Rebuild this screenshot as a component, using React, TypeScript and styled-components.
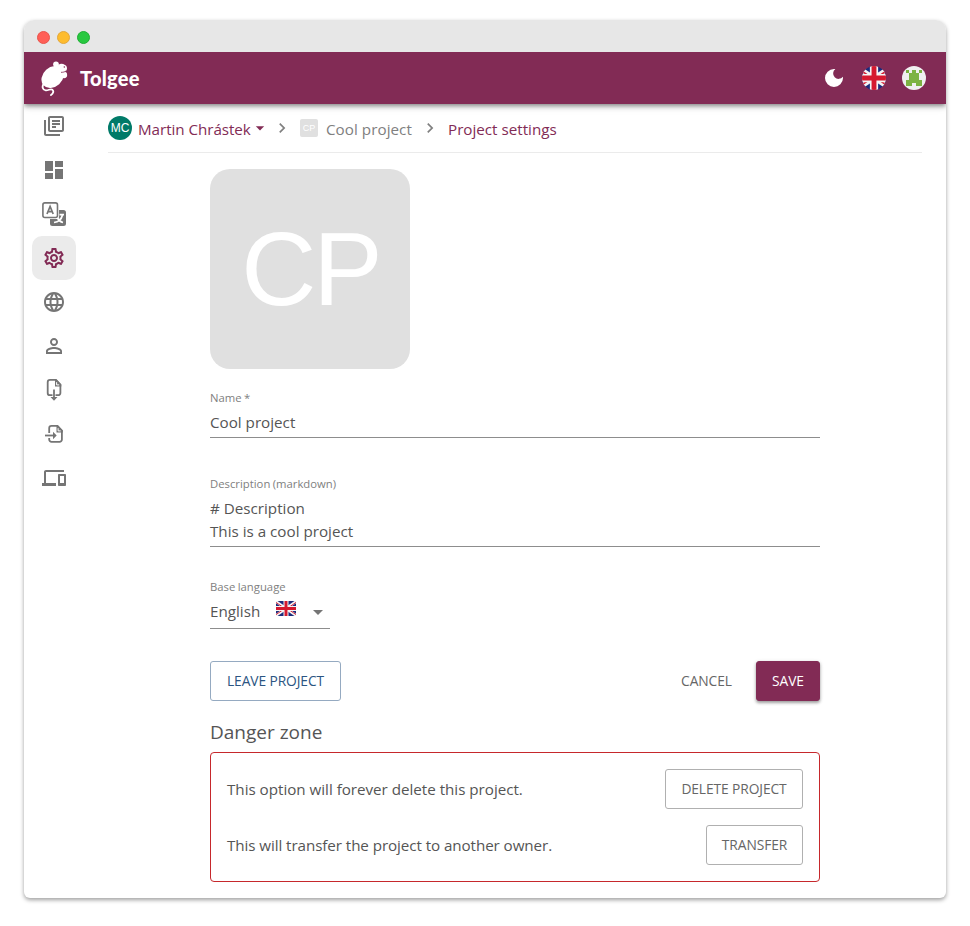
import React from "react";
import styled, { createGlobalStyle } from "styled-components";
import {
  MdOutlineLibraryBooks,
  MdDashboard,
  MdOutlineSettings,
  MdLanguage,
  MdPersonOutline,
  MdDevices,
  MdNavigateNext,
  MdArrowDropDown,
} from "react-icons/md";

const BRAND = "#822b55";

const GlobalStyle = createGlobalStyle`
  * { box-sizing: border-box; }
  body {
    margin: 0;
    background: #fff;
    font-family: "Open Sans", "Noto Sans", sans-serif;
    color: #555;
  }
  svg { display: block; flex: none; }
`;

const Page = styled.div`
  padding: 20px 24px 28px;
`;

const Window = styled.div`
  height: 878px;
  border-radius: 10px 10px 6px 6px;
  background: #fff;
  display: flex;
  flex-direction: column;
  box-shadow: 0 2px 4px rgba(0, 0, 0, 0.38);
`;

const TitleBar = styled.div`
  height: 32px;
  flex: none;
  background: #e7e7e7;
  border-radius: 10px 10px 0 0;
  display: flex;
  align-items: center;
  gap: 7px;
  padding: 2px 0 0 13px;
`;

const Light = styled.span<{ $color: string; $edge: string }>`
  width: 13px;
  height: 13px;
  border-radius: 50%;
  background: ${(p) => p.$color};
  border: 1px solid ${(p) => p.$edge};
`;

const AppBar = styled.header`
  height: 52px;
  flex: none;
  background: ${BRAND};
  display: flex;
  align-items: center;
  justify-content: space-between;
  padding: 0 20px 0 17px;
  box-shadow: 0 2px 4px -1px rgba(0, 0, 0, 0.3), 0 3px 5px rgba(0, 0, 0, 0.2),
    0 1px 10px rgba(0, 0, 0, 0.12);
  clip-path: inset(0 0 -14px 0);
`;

const Brand = styled.div`
  display: flex;
  align-items: center;
  gap: 11px;
`;

const BrandName = styled.span`
  font: 900 20px/24px Lato, sans-serif;
  letter-spacing: 0.25px;
  color: #fff;
`;

const Tools = styled.div`
  display: flex;
  align-items: center;
  gap: 16px;
`;

const MoonSlot = styled.span`
  width: 24px;
  display: flex;
  justify-content: center;
`;

const Body = styled.div`
  display: flex;
  flex: 1;
`;

const Sidebar = styled.nav`
  width: 60px;
  padding-left: 8px;
`;

const NavItem = styled.a<{ $active?: boolean }>`
  display: flex;
  align-items: center;
  justify-content: center;
  width: 44px;
  height: 44px;
  border-radius: 10px;
  color: ${(p) => (p.$active ? BRAND : "#757575")};
  background: ${(p) => (p.$active ? "#ebebeb" : "transparent")};
`;

const Content = styled.main`
  flex: 1;
  padding: 0 24px;
`;

const Breadcrumbs = styled.div`
  height: 49px;
  border-bottom: 1px solid #ebebeb;
  display: flex;
  align-items: center;
  font-size: 15.2px;
  line-height: 24px;
`;

const Crumb = styled.span<{ $muted?: boolean; $width: number; $spacing?: number }>`
  width: ${(p) => p.$width}px;
  white-space: nowrap;
  padding-top: 2px;
  letter-spacing: ${(p) => p.$spacing ?? 0}px;
  color: ${(p) => (p.$muted ? "#808080" : BRAND)};
`;

const Initials = styled.span<{ $round?: boolean }>`
  display: flex;
  align-items: center;
  justify-content: center;
  width: ${(p) => (p.$round ? 24 : 18)}px;
  height: ${(p) => (p.$round ? 24 : 18)}px;
  margin-right: ${(p) => (p.$round ? 6 : 8)}px;
  border-radius: ${(p) => (p.$round ? "50%" : "2px")};
  background: ${(p) => (p.$round ? "#007a68" : "#e0e0e0")};
  color: #fff;
  font: ${(p) => (p.$round ? 12 : 9)}px "Liberation Sans", sans-serif;
`;

const CaretSlot = styled.span`
  width: 14px;
  display: flex;
  color: ${BRAND};
`;

const Separator = styled.span`
  width: 36px;
  display: flex;
  justify-content: center;
  color: #808080;
`;

const Form = styled.form`
  width: 610px;
  margin: 16px auto 0;
`;

const ProjectAvatar = styled.div`
  width: 200px;
  height: 200px;
  border-radius: 20px;
  background: #e0e0e0;
  color: #fff;
  font: 104px/200px "Liberation Sans", sans-serif;
  letter-spacing: -3px;
  padding-left: 1px;
  text-align: center;
`;

const Field = styled.div<{ $top: number; $width?: number }>`
  margin-top: ${(p) => p.$top}px;
  width: ${(p) => (p.$width ? p.$width + "px" : "100%")};
`;

const Label = styled.div`
  font-size: 11.3px;
  line-height: 17px;
  color: #808080;
  word-spacing: -0.5px;
`;

const Value = styled.div<{ $bottom: number }>`
  display: flex;
  padding: 5px 0 ${(p) => p.$bottom}px;
  border-bottom: 1px solid #8d8d8d;
  font-size: 15.2px;
  line-height: 23px;
  white-space: pre;
`;

const Language = styled.span`
  width: 66px;
`;

const FlagSlot = styled.span`
  width: 30px;
  padding-top: 1px;
`;

const Actions = styled.div`
  display: flex;
  gap: 8px;
  margin-top: 32px;
`;

const Spacer = styled.span`
  flex: 1;
`;

type Tone = "plain" | "outlined" | "secondary" | "primary";

const toneColor: Record<Tone, string> = {
  plain: "#666",
  outlined: "#666",
  secondary: "#2b5582",
  primary: "#fff",
};
const toneBorder: Record<Tone, string> = {
  plain: "transparent",
  outlined: "#b0b0b0",
  secondary: "#95aac1",
  primary: BRAND,
};

const Button = styled.button<{ $tone: Tone; $width: number }>`
  width: ${(p) => p.$width}px;
  height: 40px;
  padding: 0 0 1px;
  border: 1px solid ${(p) => toneBorder[p.$tone]};
  border-radius: 3px;
  background: ${(p) => (p.$tone === "primary" ? BRAND : "transparent")};
  color: ${(p) => toneColor[p.$tone]};
  font: 13.8px "Open Sans", sans-serif;
  letter-spacing: -0.1px;
  white-space: nowrap;
  box-shadow: ${(p) =>
    p.$tone === "primary" ? "0 2px 3px rgba(0,0,0,.3), 0 1px 4px rgba(0,0,0,.15)" : "none"};
`;

const SectionTitle = styled.h2`
  margin: 16px 0 5px;
  font-size: 19px;
  font-weight: 400;
  line-height: 30px;
`;

const DangerBox = styled.section`
  border: 1px solid #c6282c;
  border-radius: 4px;
  padding: 16px;
  display: flex;
  flex-direction: column;
  gap: 16px;
`;

const DangerRow = styled.div`
  display: flex;
  align-items: center;
  justify-content: space-between;
  font-size: 15.2px;
`;

const DangerText = styled.span<{ $spacing?: number }>`
  letter-spacing: ${(p) => p.$spacing ?? 0}px;
`;

const MouseLogo = () => (
  <svg width="28" height="35" viewBox="0 0 84 105" fill="#fff">
    <ellipse cx="35" cy="48" rx="37" ry="29" transform="rotate(-42 35 48)" />
    <circle cx="45" cy="10" r="8.500" />
    <path d="M46 22C50 8 62 5 72 12c7 3 8 13 3 18-6 6-18 10-24 6z" />
    <circle cx="69" cy="42" r="9.500" />
    <path
      d="M8 68c-6 9-3 19 6 20 8 1 15-6 20-2 5 4 3 12-4 16"
      fill="none"
      stroke="#fff"
      strokeWidth="5.500"
      strokeLinecap="round"
    />
    <path d="M60 34c6 0 11-1 15-4" fill="none" stroke={BRAND} strokeWidth="2.500" />
    <circle cx="70" cy="18" r="2.400" fill={BRAND} />
  </svg>
);

const UnionFlag = ({ round }: { round?: boolean }) => (
  <svg
    width={round ? 24 : 20}
    height={round ? 24 : 15}
    viewBox={round ? "8 0 32 32" : "2 0 44 32"}
    preserveAspectRatio="none"
  >
    <defs>
      <clipPath id="flag-disc">
        <circle cx="24" cy="16" r="16" />
      </clipPath>
    </defs>
    <g clipPath={round ? "url(#flag-disc)" : undefined}>
      <path fill="#1b2b7c" d="M0 0h48v32H0z" />
      <path stroke="#f4f4f4" strokeWidth="6" d="M0 0l48 32M48 0L0 32" />
      <path stroke="#d5192f" strokeWidth="2" d="M-1 1l24 16M25 15l24 16M49 1L25 17M23 15L-1 31" />
      <path stroke="#f4f4f4" strokeWidth="11" d="M24 0v32M0 16h48" />
      <path stroke="#d5192f" strokeWidth="6.5" d="M24 0v32M0 16h48" />
    </g>
  </svg>
);

const MoonIcon = () => (
  <svg width="18" height="18" viewBox="3 3 18 18" fill="#fff">
    <path d="M12 3a9 9 0 1 0 9 9c0-.46-.04-.92-.1-1.36a5.4 5.4 0 1 1-7.54-7.54C12.92 3.04 12.46 3 12 3z" />
  </svg>
);

const Identicon = () => (
  <svg width="24" height="24" viewBox="0 0 24 24">
    <circle cx="12" cy="12" r="12" fill="#f0f0f0" />
    <path
      fill="#7cb342"
      shapeRendering="crispEdges"
      d="M4 4h3v3H4zM17 4h3v3h-3zM10 4h4v3h3v7h3v6h-6v-3h-4v3H4v-6h3V7h3z"
    />
  </svg>
);

const TranslateIcon = () => (
  <svg width="24" height="24" viewBox="0 0 24 24" fill="none" stroke="currentColor">
    <path
      fill="currentColor"
      stroke="none"
      d="M17 8h4.5A2.5 2.5 0 0 1 24 10.500v11A2.500 2.500 0 0 1 21.500 24h-11A2.500 2.500 0 0 1 8 21.500V17h7a2 2 0 0 0 2-2z"
    />
    <rect x=".9" y=".9" width="14.600" height="14.600" rx="2" strokeWidth="1.600" />
    <path strokeWidth="1.700" d="M5 12L8.100 4.500 11.200 12M6 9.700h4.400" />
    <path stroke="#fff" strokeWidth="1.700" d="M17.500 12.600H22M20.500 13c-1 4-4 7-8.500 7.500M15.500 16c1 2 3 4 5.500 4.500" />
  </svg>
);

const ExportIcon = () => (
  <svg width="24" height="24" viewBox="0 0 24 24" fill="none" stroke="currentColor" strokeWidth="1.800">
    <path d="M10.500 17.200H8a2.300 2.300 0 0 1-2.300-2.300V4.200A2.300 2.300 0 0 1 8 1.900h6l4.400 4.600v8.400a2.300 2.300 0 0 1-2.300 2.300h-2.600" />
    <path d="M12 11.500v9" />
    <path fill="currentColor" stroke="none" d="M13 1.500h1.500L19.300 6.500V8.500H13zM8.500 19h7L12 22.700z" />
    <path stroke="#fff" strokeWidth="1" d="M14.600 4.200v2.700h2.600" />
  </svg>
);

const ImportIcon = () => (
  <svg width="24" height="24" viewBox="0 0 24 24" fill="none" stroke="currentColor" strokeWidth="1.800">
    <path d="M7.200 11V6.200A2.300 2.300 0 0 1 9.500 3.900h6l4.400 4.600v9a2.300 2.300 0 0 1-2.300 2.300H9.500a2.300 2.300 0 0 1-2.300-2.300V16" />
    <path d="M3 13.500h9" />
    <path fill="currentColor" stroke="none" d="M14.500 3.500H16l4.800 5v2h-6.300zM11 9.800l3.700 3.700L11 17.200z" />
    <path stroke="#fff" strokeWidth="1" d="M16.100 6.200v2.700h2.600" />
  </svg>
);

const NAV = [
  { name: "Projects", icon: <MdOutlineLibraryBooks size={24} /> },
  { name: "Dashboard", icon: <MdDashboard size={24} /> },
  { name: "Translations", icon: <TranslateIcon /> },
  { name: "Settings", icon: <MdOutlineSettings size={24} />, active: true },
  { name: "Languages", icon: <MdLanguage size={24} /> },
  { name: "Members", icon: <MdPersonOutline size={24} /> },
  { name: "Export", icon: <ExportIcon /> },
  { name: "Import", icon: <ImportIcon /> },
  { name: "Integrate", icon: <MdDevices size={24} /> },
];

export default function App() {
  return (
    <Page>
      <GlobalStyle />
      <Window>
        <TitleBar>
          <Light $color="#ff5f57" $edge="#e9544c" />
          <Light $color="#febc2e" $edge="#e3a73c" />
          <Light $color="#28c840" $edge="#1fae34" />
        </TitleBar>
        <AppBar>
          <Brand>
            <MouseLogo />
            <BrandName>Tolgee</BrandName>
          </Brand>
          <Tools>
            <MoonSlot>
              <MoonIcon />
            </MoonSlot>
            <UnionFlag round />
            <Identicon />
          </Tools>
        </AppBar>
        <Body>
          <Sidebar>
            {NAV.map((item) => (
              <NavItem key={item.name} aria-label={item.name} $active={item.active}>
                {item.icon}
              </NavItem>
            ))}
          </Sidebar>
          <Content>
            <Breadcrumbs>
              <Initials $round>MC</Initials>
              <Crumb $width={112} $spacing={-0.05}>Martin Chrástek</Crumb>
              <CaretSlot>
                <MdArrowDropDown size={20} />
              </CaretSlot>
              <Separator>
                <MdNavigateNext size={20} />
              </Separator>
              <Initials>CP</Initials>
              <Crumb $muted $width={86} $spacing={0.05}>
                Cool project
              </Crumb>
              <Separator>
                <MdNavigateNext size={20} />
              </Separator>
              <Crumb $width={110}>Project settings</Crumb>
            </Breadcrumbs>
            <Form>
              <ProjectAvatar>CP</ProjectAvatar>
              <Field $top={20}>
                <Label>Name *</Label>
                <Value $bottom={3}>Cool project</Value>
              </Field>
              <Field $top={37}>
                <Label>Description (markdown)</Label>
                <Value $bottom={3}>{"# Description\nThis is a cool project"}</Value>
              </Field>
              <Field $top={31} $width={120}>
                <Label>Base language</Label>
                <Value $bottom={4}>
                  <Language>English</Language>
                  <FlagSlot>
                    <UnionFlag />
                  </FlagSlot>
                  <MdArrowDropDown size={24} color="#757575" />
                </Value>
              </Field>
              <Actions>
                <Button type="button" $tone="secondary" $width={131}>LEAVE PROJECT</Button>
                <Spacer />
                <Button type="button" $tone="plain" $width={83}>CANCEL</Button>
                <Button type="button" $tone="primary" $width={64}>SAVE</Button>
              </Actions>
              <SectionTitle>Danger zone</SectionTitle>
              <DangerBox>
                <DangerRow>
                  <DangerText $spacing={-0.02}>This option will forever delete this project.</DangerText>
                  <Button type="button" $tone="outlined" $width={138}>DELETE PROJECT</Button>
                </DangerRow>
                <DangerRow>
                  <DangerText $spacing={-0.08}>This will transfer the project to another owner.</DangerText>
                  <Button type="button" $tone="outlined" $width={97}>TRANSFER</Button>
                </DangerRow>
              </DangerBox>
            </Form>
          </Content>
        </Body>
      </Window>
    </Page>
  );
}
